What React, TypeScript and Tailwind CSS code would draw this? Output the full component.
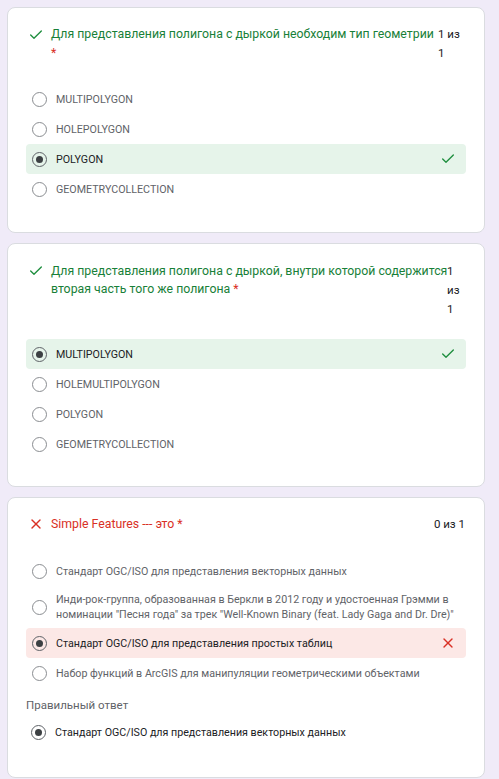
import React from 'react';
import { Check, X } from 'lucide-react';

type Opt = { label: React.ReactNode; selected?: boolean; state?: 'ok' | 'bad' };

const Radio: React.FC<{ on?: boolean }> = ({ on }) => (
  <span
    className={`flex-none w-[15px] h-[15px] rounded-full border-[1.5px] flex items-center justify-center ${
      on ? 'border-[#5f6368]' : 'border-[#8a8d91]'
    }`}
  >
    {on && <span className="w-[7px] h-[7px] rounded-full bg-[#3c4043]" />}
  </span>
);

const OptionRow: React.FC<Opt> = ({ label, selected, state }) => {
  const bg = state === 'ok' ? 'bg-[#e6f4ea]' : state === 'bad' ? 'bg-[#fce8e6]' : '';
  return (
    <div className={`flex items-center min-h-[30px] py-[6px] pl-[6px] pr-[10px] rounded-[4px] ${bg}`}>
      <Radio on={selected} />
      <div className={`ml-[9px] flex-1 min-w-0 text-[10.7px] leading-[15px] ${selected ? 'text-[#202124]' : 'text-[#5f6368]'}`}>
        {label}
      </div>
      {state === 'ok' && <Check size={16} strokeWidth={2} className="text-[#1e8e3e] flex-none" />}
      {state === 'bad' && <X size={16} strokeWidth={2} className="text-[#d93025] flex-none" />}
    </div>
  );
};

const Card: React.FC<{ children: React.ReactNode; className?: string }> = ({ children, className }) => (
  <div className={`w-[478px] bg-white rounded-[8px] border border-[#dadce0] ${className ?? ''}`}>{children}</div>
);

export default function App() {
  return (
    <div
      className="min-h-screen bg-[#f0ebf8] pl-[7px] pt-[7px] flex flex-col gap-[10px]"
      style={{ fontFamily: 'Roboto, "Noto Sans", Arial, sans-serif' }}
    >
      {/* Question 1 */}
      <Card className="pt-[17px] pb-[28px] px-[18px]">
        <div className="flex items-start text-[12.3px] leading-[19px]">
          <Check size={16} strokeWidth={2} className="text-[#1e8e3e] flex-none mt-[2px] ml-[2px]" />
          <div className="ml-[7px] flex-1 min-w-0 text-[#188038]">
            <div className="whitespace-nowrap">Для представления полигона с дыркой необходим тип геометрии</div>
            <span className="text-[#d93025]">*</span>
          </div>
          <div className="flex-none w-[28px] text-[#202124] text-[11.5px] leading-[19px]">
            1 из<br />1
          </div>
        </div>
        <div className="mt-[21px] flex flex-col">
          <OptionRow label="MULTIPOLYGON" />
          <OptionRow label="HOLEPOLYGON" />
          <OptionRow label="POLYGON" selected state="ok" />
          <OptionRow label="GEOMETRYCOLLECTION" />
        </div>
      </Card>

      {/* Question 2 */}
      <Card className="pt-[18px] pb-[27px] px-[18px]">
        <div className="flex items-start text-[12.3px] leading-[18px]">
          <Check size={16} strokeWidth={2} className="text-[#1e8e3e] flex-none mt-[1px] ml-[2px]" />
          <div className="ml-[7px] flex-1 min-w-0 text-[#188038]">
            <div className="whitespace-nowrap">Для представления полигона с дыркой, внутри которой содержится</div>
            <div>
              вторая часть того же полигона <span className="text-[#d93025]">*</span>
            </div>
          </div>
          <div className="flex-none w-[19px] text-[#202124] text-[11.5px] leading-[19px]">
            1<br />из<br />1
          </div>
        </div>
        <div className="mt-[20px] flex flex-col">
          <OptionRow label="MULTIPOLYGON" selected state="ok" />
          <OptionRow label="HOLEMULTIPOLYGON" />
          <OptionRow label="POLYGON" />
          <OptionRow label="GEOMETRYCOLLECTION" />
        </div>
      </Card>

      {/* Question 3 */}
      <Card className="pt-[16px] pb-[37px] px-[18px]">
        <div className="flex items-start text-[12.3px] leading-[20px]">
          <X size={16} strokeWidth={2} className="text-[#d93025] flex-none mt-[2px] ml-[2px]" />
          <div className="ml-[7px] flex-1 min-w-0 text-[#d93025]">Simple Features --- это *</div>
          <div className="flex-none text-[#202124] text-[11.5px] pr-[1px]">0 из 1</div>
        </div>
        <div className="mt-[22px] flex flex-col">
          <OptionRow label="Стандарт OGC/ISO для представления векторных данных" />
          <OptionRow
            label={
              <>
                <div className="whitespace-nowrap">
                  Инди-рок-группа, образованная в Беркли в 2012 году и удостоенная Грэмми в
                </div>
                <div className="whitespace-nowrap">
                  номинации "Песня года" за трек "Well-Known Binary (feat. Lady Gaga and Dr. Dre)"
                </div>
              </>
            }
          />
          <OptionRow label="Стандарт OGC/ISO для представления простых таблиц" selected state="bad" />
          <OptionRow label="Набор функций в ArcGIS для манипуляции геометрическими объектами" />
        </div>
        <div className="mt-[10px] text-[11.5px] leading-[15px] text-[#5f6368]">Правильный ответ</div>
        <div className="mt-[12px] flex items-center pl-[5px]">
          <Radio on />
          <div className="ml-[9px] text-[10.7px] leading-[15px] text-[#202124]">
            Стандарт OGC/ISO для представления векторных данных
          </div>
        </div>
      </Card>
    </div>
  );
}
